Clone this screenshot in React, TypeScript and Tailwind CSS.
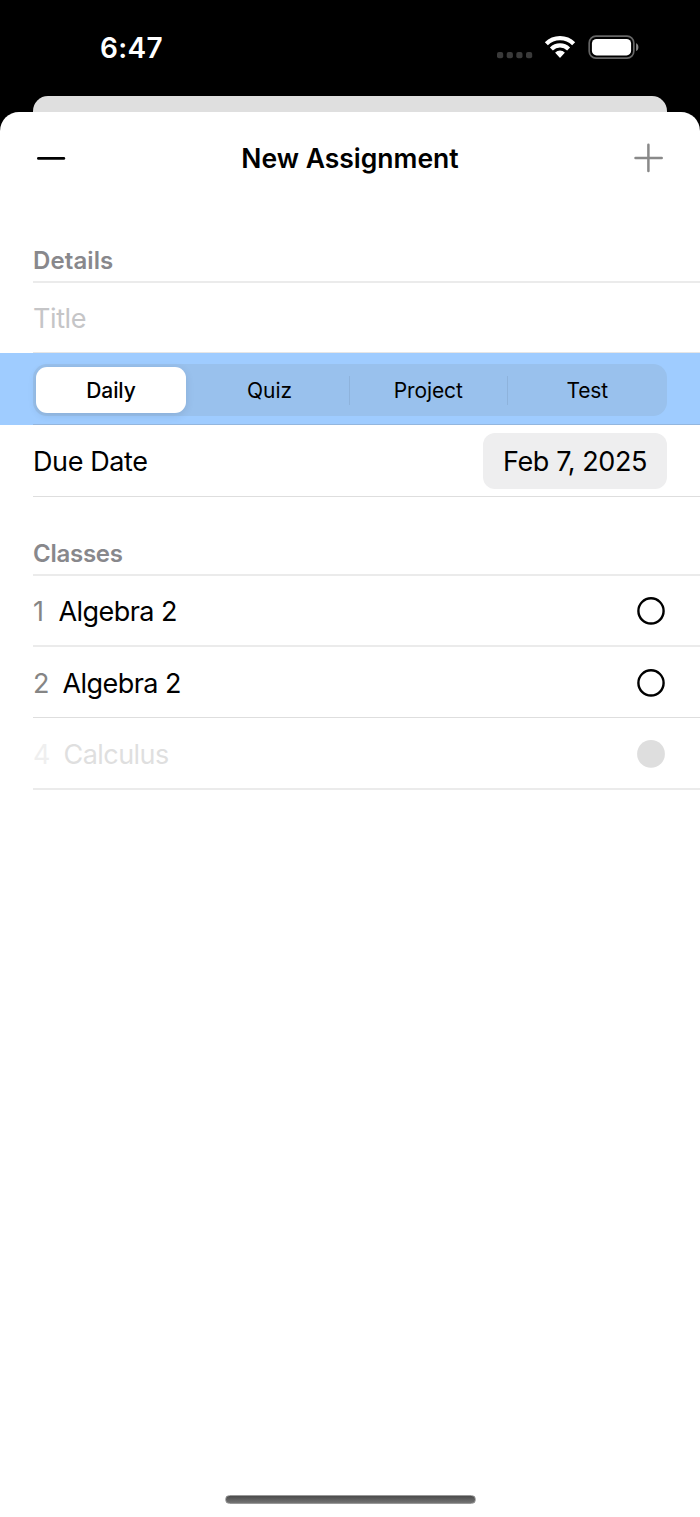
import { useState } from 'react';
import clsx from 'clsx';

interface ClassItem {
  period: number;
  name: string;
  disabled?: boolean;
  periodWidth: string;
  row: string;
}

const segments = [
  { label: 'Daily', width: 'w-[155px]', tracking: 'tracking-[-0.1px]' },
  { label: 'Quiz', width: 'w-[161px]', tracking: 'tracking-normal pl-0.5' },
  { label: 'Project', width: 'w-[157.5px]', tracking: 'tracking-[-0.1px]' },
  { label: 'Test', width: 'w-[160.5px]', tracking: 'tracking-[-0.2px]' },
];

const classes: ClassItem[] = [
  { period: 1, name: 'Algebra 2', periodWidth: 'w-[25.5px]', row: 'border-b-2 border-[#ebebeb] h-[71px]' },
  { period: 2, name: 'Algebra 2', periodWidth: 'w-[29.5px]', row: 'border-b border-[#dedede] h-[71px] pt-px' },
  { period: 4, name: 'Calculus', disabled: true, periodWidth: 'w-[30.5px]', row: 'border-b-2 border-[#ebebeb] h-[72px] pt-px' },
];

function StatusBar() {
  return (
    <div className="flex h-24 shrink-0 items-start justify-between pr-[60px] pl-[100px] pt-[35px]">
      <span className="text-[28px] leading-[26px] font-semibold tracking-[0.3px] text-white">6:47</span>
      <div className="flex">
        <svg width="36" height="26" viewBox="0 0 36 26" fill="#3a3a3a">
          <rect x="0" y="17.1" width="6.2" height="6.2" rx="2" />
          <rect x="9.7" y="17.1" width="6.2" height="6.2" rx="2" />
          <rect x="19.3" y="17.1" width="6.2" height="6.2" rx="2" />
          <rect x="29" y="17.1" width="6.2" height="6.2" rx="2" />
        </svg>
        <svg className="ml-[11px]" width="32" height="26" viewBox="0 0 32 26" fill="none" stroke="#fff">
          <path d="M2.350 8.850A19.300 19.300 0 0 1 29.650 8.850" strokeWidth="4.300" />
          <path d="M7.400 13.900A12.200 12.200 0 0 1 24.600 13.900" strokeWidth="4.200" />
          <path d="M16 22.100L11.900 17.700A6 6 0 0 1 20.100 17.700z" fill="#fff" strokeWidth="1.200" strokeLinejoin="round" />
        </svg>
        <svg className="ml-3" width="52" height="26" viewBox="0 0 52 26">
          <rect x="1.200" y="1.200" width="44.600" height="21.900" rx="6.800" fill="none" stroke="#666" strokeWidth="1.700" />
          <rect x="3.900" y="3.900" width="39.200" height="16.500" rx="4.600" fill="#fff" />
          <path d="M48.100 8.300v7.800c1.500-.6 2.300-2.100 2.300-3.900s-.8-3.300-2.300-3.900z" fill="#8a8a8a" />
        </svg>
      </div>
    </div>
  );
}

function SheetHeader() {
  return (
    <div className="grid h-[92px] shrink-0 grid-cols-[1fr_auto_1fr] items-center px-[36px]">
      <svg width="30" height="30" viewBox="0 0 30 30" fill="none" stroke="#000" strokeWidth="2.8" strokeLinecap="round">
        <path d="M2.400 15.400h25.400" />
      </svg>
      <h1 className="pt-0.5 text-[26.5px] font-semibold tracking-[0px] text-black">New Assignment</h1>
      <svg className="justify-self-end" width="30" height="30" viewBox="0 0 30 30" fill="none" stroke="#898989" strokeWidth="2.5" strokeLinecap="round">
        <path d="M1.500 14.900h26.200M14.400 1.800v26.200" />
      </svg>
    </div>
  );
}

function SectionTitle({ children, tracking }: { children: string; tracking: string }) {
  return (
    <h2
      className={clsx(
        'ml-[33px] flex h-[79px] shrink-0 items-end border-b-2 border-[#ebebeb] pb-1 text-[24px] leading-[32px] font-semibold text-[#88888c]',
        tracking
      )}
    >
      {children}
    </h2>
  );
}

function ClassRow({ item }: { item: ClassItem }) {
  return (
    <div className={clsx('ml-[33px] flex shrink-0 items-center justify-between pr-[35px]', item.row)}>
      <div className={clsx('flex items-center pt-[3px] text-[27px] tracking-[-0.55px]', item.disabled && 'text-[#dfdfdf]')}>
        <span className={clsx(item.periodWidth, item.disabled ? 'text-[#efefef]' : 'text-[#858585]')}>{item.period}</span>
        <span>{item.name}</span>
      </div>
      <svg width="28" height="28" viewBox="0 0 28 28">
        {item.disabled ? (
          <circle cx="14" cy="13.9" r="13.9" fill="#dedede" />
        ) : (
          <circle cx="14" cy="13.9" r="12.6" fill="none" stroke="#000" strokeWidth="2.4" />
        )}
      </svg>
    </div>
  );
}

export default function App() {
  const [selected, setSelected] = useState('Daily');

  return (
    <div className="flex h-[1517px] w-[700px] flex-col overflow-hidden bg-black font-['Inter','Liberation_Sans',sans-serif] text-black">
      <StatusBar />

      {/* Edge of the screen underneath the sheet */}
      <div className="mx-[33px] h-[34px] shrink-0 rounded-t-[15px] bg-[#dfdfdf]" />

      <main className="z-10 -mt-[18px] flex flex-1 flex-col rounded-t-[19px] bg-white">
        <SheetHeader />

        <SectionTitle tracking="tracking-[0.1px]">Details</SectionTitle>
        <div className="ml-[33px] flex h-[70px] shrink-0 items-center border-b border-[#e6e6e6] pt-[3px] text-[27px] tracking-[-0.4px] text-[#c5c5c7]">
          Title
        </div>

        <div className="h-[72px] shrink-0 bg-[#9fccff] pl-[33px]">
          <div className="h-full border-b border-[#93b6de] pt-[11px] pr-[33px]">
            <div className="flex h-[52px] items-center rounded-[14px] bg-[#99c1ed] text-[21px]">
              {segments.map((segment, index) => (
                <button
                  key={segment.label}
                  onClick={() => setSelected(segment.label)}
                  className={clsx('flex h-full items-center', segment.width, segment.tracking)}
                >
                  {index > 1 && <span className="h-[29px] w-px bg-[#8eb3dc]" />}
                  <span
                    className={clsx(
                      'flex flex-1 items-center justify-center pt-0.5',
                      selected === segment.label
                        ? 'ml-[3px] mr-[2px] h-[46px] rounded-[11px] bg-white font-medium shadow-[0_2px_8px_rgba(0,0,0,0.1)]'
                        : 'h-full'
                    )}
                  >
                    {segment.label}
                  </span>
                </button>
              ))}
            </div>
          </div>
        </div>

        <div className="ml-[33px] flex h-[72px] shrink-0 items-center justify-between border-b border-[#dedede] pr-[33px] text-[27px] tracking-[-0.4px]">
          <span className="pt-[3px]">Due Date</span>
          <button className="flex h-14 w-[184px] items-center justify-center rounded-[12px] bg-[#eeeeef] pt-[3px]">
            Feb 7, 2025
          </button>
        </div>

        <SectionTitle tracking="tracking-[-0.25px]">Classes</SectionTitle>
        {classes.map((item) => (
          <ClassRow key={item.period} item={item} />
        ))}

        <div className="mx-auto mt-auto mb-[13px] h-[9px] w-[251px] rounded-full border border-[#999] bg-linear-to-b from-[#4c4c4c] to-[#747474]" />
      </main>
    </div>
  );
}
